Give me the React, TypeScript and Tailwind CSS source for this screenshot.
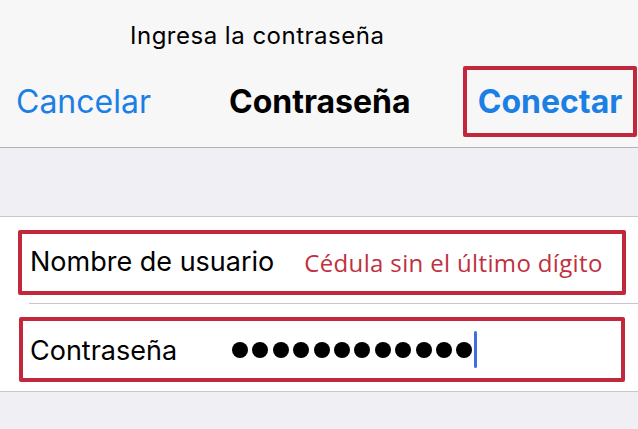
import React from 'react';

const font = { fontFamily: 'Inter, "Noto Sans", sans-serif' };

const Dots: React.FC<{ count: number }> = ({ count }) => (
  <div className="flex items-center gap-[4.4px]">
    {Array.from({ length: count }).map((_, i) => (
      <span key={i} className="block h-[16px] w-[16px] rounded-full bg-black" />
    ))}
  </div>
);

export default function App() {
  return (
    <div className="h-[429px] w-[638px] overflow-hidden bg-[#efeff4]" style={font}>
      {/* header */}
      <div className="h-[148px] border-b border-[#b3b3b7] bg-[#f7f7f8]">
        <div className="pt-[20px] pl-[130px] text-[24px] leading-[32px] tracking-[0.5px] text-black">
          Ingresa la contraseña
        </div>
        <div className="mt-[14px] flex items-center">
          <span className="ml-[16px] text-[32px] leading-[40px] text-[#1c7fe4]">Cancelar</span>
          <span className="ml-[78px] text-[32px] font-bold leading-[40px] text-black">Contraseña</span>
          <div className="ml-auto mr-[1px] flex h-[71px] w-[174px] items-center justify-center rounded-[2px] border-[4px] border-[#c2283b]">
            <span className="text-[32px] font-bold leading-[40px] text-[#1c7fe4]">Conectar</span>
          </div>
        </div>
      </div>

      {/* spacer */}
      <div className="h-[69px] border-b border-[#c8c7cc]" />

      {/* form */}
      <div className="border-b border-[#c8c7cc] bg-white">
        <div className="pl-[18px] pr-[12px] pt-[13px] pb-[8px]">
          <div className="flex h-[65px] items-center rounded-[2px] border-[4px] border-[#c2283b] pl-[8px]">
            <span className="text-[27px] text-black">Nombre de usuario</span>
            <span className="ml-[30px] text-[24px] tracking-[0.35px] text-[#c0303f]" style={{ fontFamily: '"Open Sans", "Noto Sans", sans-serif' }}>
              Cédula sin el último dígito
            </span>
          </div>
        </div>
        <div className="ml-[29px] h-px bg-[#c8c7cc]" />
        <div className="pl-[19px] pr-[13px] pt-[13px] pb-[9px]">
          <div className="flex h-[65px] items-center rounded-[2px] border-[4px] border-[#c2283b] pl-[7px]">
            <span className="mt-[4px] w-[202px] text-[27px] text-black">Contraseña</span>
            <Dots count={12} />
            <span className="ml-[2px] block h-[37px] w-[3px] rounded-full bg-[#3e6fdc]" />
          </div>
        </div>
      </div>
    </div>
  );
}
